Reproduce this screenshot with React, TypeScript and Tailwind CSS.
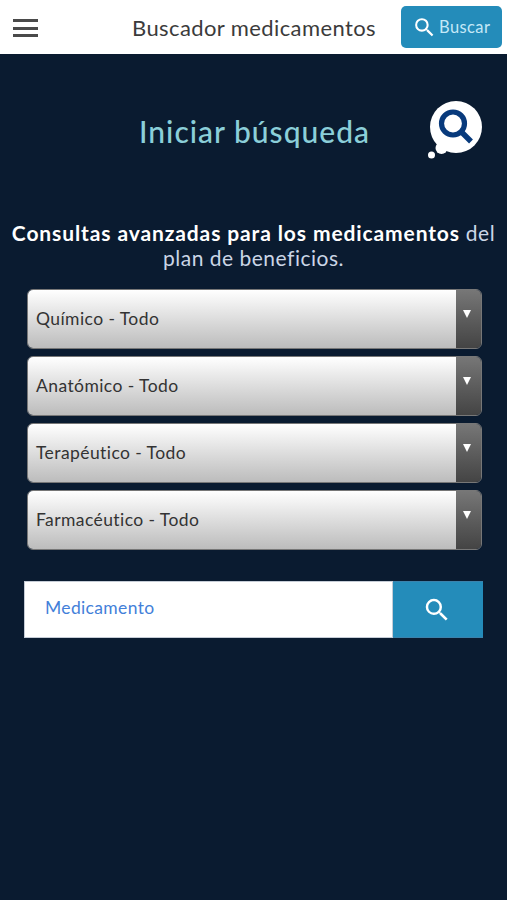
import React from "react";
import { MdSearch } from "react-icons/md";

const filtros = ["Químico", "Anatómico", "Terapéutico", "Farmacéutico"];

const Header = () => {
  return (
    <header className="flex h-[54px] items-center bg-white pl-[13px] pr-[5px]">
      {/* Menu */}
      <button
        aria-label="Menú"
        className="mt-[2px] flex w-[25px] flex-col gap-[4.5px]"
      >
        <span className="h-[3px] w-full bg-[#4a4a4a]" />
        <span className="h-[3px] w-full bg-[#4a4a4a]" />
        <span className="h-[3px] w-full bg-[#4a4a4a]" />
      </button>
      <h1 className="ml-[94px] mt-[2px] w-[269px] whitespace-nowrap text-[22px] leading-[28px] tracking-[0.4px] text-[#3b3b3b]">
        Buscador medicamentos
      </h1>
      <button className="flex h-[42px] w-[101px] items-center rounded-[5px] bg-[#248cba] pl-[11px] text-[#c4e8f7]">
        <MdSearch className="text-[25px] text-white" />
        <span className="ml-[2px] text-[16.5px] tracking-[0.4px]">Buscar</span>
      </button>
    </header>
  );
};

// Globo con lupa
const GloboBusqueda = () => (
  <svg width="58" height="60" viewBox="0 0 58 60" fill="none">
    <circle cx="30" cy="28" r="26" fill="#fff" />
    <circle cx="15.5" cy="49" r="6" fill="#fff" />
    <circle cx="5.5" cy="56" r="3.5" fill="#fff" />
    <circle cx="27" cy="24.5" r="11.5" stroke="#083a7c" strokeWidth="5.2" />
    <path d="M35 32.5L45 42.5" stroke="#083a7c" strokeWidth="5.5" />
  </svg>
);

const Filtro = ({ nombre }: { nombre: string }) => {
  return (
    <button className="flex h-[60px] w-full overflow-hidden rounded-[6px] border border-[#777] text-left">
      <span className="flex h-full flex-1 items-center bg-gradient-to-b from-white to-[#bcbcbc] pl-[8px] pt-[1px] text-[17.5px] tracking-[0.42px] text-[#333]">
        {nombre} - Todo
      </span>
      <span className="flex h-full w-[25px] justify-center bg-gradient-to-b from-[#777] to-[#444] pt-[20px]">
        <svg width="8" height="8" viewBox="0 0 8 8" className="mr-[3px]">
          <path d="M0 0H8L4 8Z" fill="#fff" />
        </svg>
      </span>
    </button>
  );
};

const App = () => {
  return (
    <div className="min-h-screen overflow-hidden bg-[#0a1b30] font-['Lato',sans-serif]">
      <Header />

      {/* Titulo */}
      <div className="mt-[45px] grid grid-cols-[1fr_229px_1fr] items-center">
        <h2 className="col-start-2 mt-[3px] whitespace-nowrap text-[30px] font-medium leading-[36px] tracking-[1px] text-[#8bcfd9]">
          Iniciar búsqueda
        </h2>
        <div className="pl-[58px]">
          <GloboBusqueda />
        </div>
      </div>

      <p className="mt-[61px] whitespace-nowrap text-center text-[21px] leading-[25px] tracking-[0.5px] text-[#cbd6e6]">
        <strong className="font-bold tracking-[0.89px] text-white">
          Consultas avanzadas para los medicamentos
        </strong>{" "}
        del
        <br />
        plan de beneficios.
      </p>

      {/* Filtros */}
      <div className="ml-[27px] mt-[18.5px] flex w-[455px] flex-col gap-[7.2px]">
        {filtros.map((nombre) => (
          <Filtro key={nombre} nombre={nombre} />
        ))}
      </div>

      {/* Buscador */}
      <form className="ml-[24px] mt-[31px] flex h-[57px] w-[459px]">
        <input
          type="text"
          placeholder="Medicamento"
          className="w-[369px] border border-[#c5ccd6] bg-white pb-[2px] pl-[20px] text-[17.5px] tracking-[0.35px] outline-none placeholder:text-[#4380d9]"
        />
        <button
          type="button"
          aria-label="Buscar"
          className="flex flex-1 items-center justify-center border-y border-[#3b82ac] bg-[#248cba] pr-[2px] text-[30px] text-white"
        >
          <MdSearch />
        </button>
      </form>
    </div>
  );
};

export default App;
